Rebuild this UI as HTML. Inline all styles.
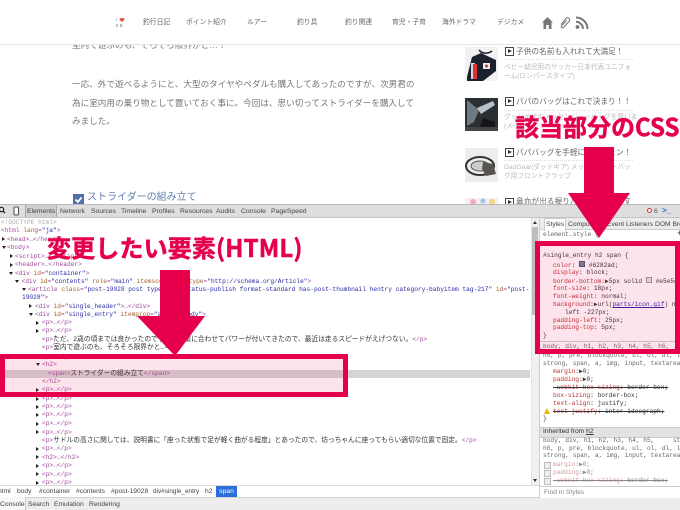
<!DOCTYPE html>
<html lang="ja"><head><meta charset="utf-8"><title>DevTools</title>
<style>
html,body{margin:0;padding:0;background:#fff}
#w{position:relative;width:680px;height:510px;overflow:hidden;background:#fff;font-family:"Liberation Sans","Noto Sans CJK JP",sans-serif;filter:blur(.3px)}
#w div,#w svg{position:absolute}
.n{top:18px;font-size:6.8px;line-height:9px;color:#666;white-space:nowrap}
.a{left:72px;font-size:8.6px;line-height:12px;color:#777;white-space:nowrap}
.t{left:516px;font-size:7.7px;line-height:10px;color:#666;white-space:nowrap}
.d{left:504px;font-size:6.7px;line-height:9px;color:#bbb;white-space:nowrap}
.l{left:504px;width:129px;height:0;border-top:1px dotted #ddd}
.b{left:505px;width:7px;height:7px;border:1px solid #444;background:#fff}
.b:after{content:"";position:absolute;left:2px;top:1px;border-left:4px solid #333;border-top:2.5px solid transparent;border-bottom:2.5px solid transparent}
.u{top:207px;font-size:6.8px;line-height:9px;color:#444;white-space:nowrap}
.m{font-family:"Liberation Mono","Noto Sans CJK JP",monospace;font-size:6.2px;line-height:8px;white-space:pre;color:#222}
.m i{font-style:normal;color:#a04a9c}
.m b{font-weight:normal;color:#a5612a}
.m u{text-decoration:none;color:#2b2ba6}
.m span{font-size:6.72px;color:#333}
.s{font-family:"Liberation Mono",monospace;font-size:6.2px;line-height:8px;white-space:pre;color:#333}
.s i{font-style:normal;color:#c03030}
.s s{color:#444}
.g{color:#888}
.g i{color:#d99}
.r{border-left:3.5px solid #222;border-top:2px solid transparent;border-bottom:2px solid transparent;width:0;height:0}
.o{border-top:3.5px solid #222;border-left:2px solid transparent;border-right:2px solid transparent;width:0;height:0}
.c{font-size:6.7px;line-height:9px;color:#444;white-space:nowrap}
.k{left:544px;width:5px;height:5px;border:1px solid #bbb;background:#eee}
.h{font-family:"Noto Sans CJK JP",sans-serif;font-weight:700;font-size:24px;line-height:30px;color:#e6004c;white-space:nowrap;-webkit-text-stroke:.5px #e6004c}
</style></head><body><div id="w">

<!-- page article -->
<div class="a" style="top:39px;color:#777">室内で遊ぶのも、そろそろ限界かと…！</div>
<div class="a" style="top:78px">一応、外で遊べるようにと、大型のタイヤやペダルも購入してあったのですが、次男君の</div>
<div class="a" style="top:97px">為に室内用の乗り物として置いておく事に。今回は、思い切ってストライダーを購入して</div>
<div class="a" style="top:115px">みました。</div>
<div style="left:73px;top:194px;width:11px;height:11px;background:#5170ad"></div>
<svg style="left:73px;top:194px" width="11" height="11"><path d="M2.5 5.5l2.3 2.5 3.8-4.6" stroke="#fff" stroke-width="1.8" fill="none"/></svg>
<div style="left:87px;top:191px;font-size:10px;line-height:14px;color:#6282ad;white-space:nowrap">ストライダーの組み立て</div>

<!-- header -->
<div style="left:0;top:0;width:680px;height:44px;background:#fff;border-bottom:1px solid #e4e4e4"></div>
<div style="left:115.500px;top:17px;font-size:4.5px;line-height:5.5px;color:#777;white-space:pre">I<br>S B</div>
<svg style="left:119px;top:17px" width="6" height="6" viewBox="0 0 7 6"><path d="M3.5 5.5L.6 2.5C0 1 2.500-.3 3.500 1.500 4.500-.3 7 1 6.400 2.500z" fill="#d8553f"/></svg>
<div class="n" style="left:143px">釣行日記</div>
<div class="n" style="left:186px">ポイント紹介</div>
<div class="n" style="left:247px">ルアー</div>
<div class="n" style="left:297px">釣り具</div>
<div class="n" style="left:345px">釣り関連</div>
<div class="n" style="left:392px">育児・子育</div>
<div class="n" style="left:442px">海外ドラマ</div>
<div class="n" style="left:497px">デジカメ</div>
<svg style="left:541px;top:15px" width="48" height="15" viewBox="0 0 48 15"><path d="M1 7.5L6.500 2 12 7.500 10.500 7.500 10.500 14 7.800 14 7.800 10 5.200 10 5.200 14 2.500 14 2.500 7.500z" fill="#777"/><path d="M20 9.500l5-6c2-2 5 .8 3 3l-5.500 6c-1.300 1.200-3-.4-1.800-1.800l4.800-5.200" stroke="#777" stroke-width="1.100" fill="none"/><circle cx="36.500" cy="12" r="1.900" fill="#777"/><path d="M35 6.800a7.200 7.200 0 0 1 7 7M35 2.500a11.500 11.500 0 0 1 11.500 11.500" stroke="#777" stroke-width="2" fill="none"/></svg>

<!-- sidebar -->
<svg style="left:465px;top:47px" width="33" height="34" viewBox="0 0 33 34"><rect width="33" height="34" fill="#f2f2f2"/><path d="M2 30L7 10 16 6 31 13 31 24 18 34H2z" fill="#1c2130"/><path d="M6 16h4v16H6z" fill="#d8d8d8"/><rect x="8" y="17" width="4" height="15" fill="#d33"/><rect x="18" y="16" width="7" height="6" fill="#eee"/><circle cx="21.500" cy="19" r="1.500" fill="#c33"/><path d="M14 3c3 4 9 4 13 1" stroke="#1c2130" stroke-width="1.500" fill="none"/></svg>
<svg style="left:465px;top:98px" width="33" height="33" viewBox="0 0 33 33"><rect width="33" height="33" fill="#2b2e33"/><path d="M2 2L14 12 9 24 2 28z" fill="#6f7a85"/><path d="M12 10l16-7 2 4-14 9z" fill="#b9c1c9"/><path d="M18 20l12 4v8H14z" fill="#14161a"/><rect x="0" y="29" width="33" height="4" fill="#444"/></svg>
<svg style="left:465px;top:148px" width="33" height="34" viewBox="0 0 33 34"><rect width="33" height="34" fill="#eceded"/><ellipse cx="15" cy="18" rx="14" ry="9" fill="none" stroke="#333" stroke-width="2"/><ellipse cx="15" cy="18" rx="9" ry="5" fill="#ccc" stroke="#555"/><path d="M18 14l10 2 3 10-10 2-4-7z" fill="#57544f"/></svg>
<svg style="left:465px;top:198px" width="33" height="7" viewBox="0 0 33 7"><rect width="33" height="7" fill="#f7eef3"/><circle cx="8" cy="4" r="3" fill="#f0a8c8"/><circle cx="18" cy="3" r="2.500" fill="#9cc8ec"/><circle cx="27" cy="4" r="3" fill="#f0d880"/></svg>
<div class="b" style="top:47px"></div><div class="t" style="top:47px">子供の名前も入れれて大満足！</div><div class="l" style="top:59px"></div>
<div class="d" style="top:63px">ベビー幼児用のサッカー日本代表ユニフォ</div><div class="d" style="top:72px">ーム(ロンパースタイプ)</div>
<div class="b" style="top:97px"></div><div class="t" style="top:97px">パパのバッグはこれで決まり！！</div><div class="l" style="top:110px"></div>
<div class="d" style="top:113px">グッドギアのメッセンジャーバッグを買いま</div><div class="d" style="top:122px">(メッセンジャーバッグ)</div>
<div class="b" style="top:148px"></div><div class="t" style="top:148px">パパバッグを手軽にイメチェン！</div><div class="l" style="top:160px"></div>
<div class="d" style="top:163px">DadGear(ダッドギア) メッセンジャーバッ</div><div class="d" style="top:172px">グ用フロントフラップ</div>
<div class="b" style="top:198px"></div><div class="t" style="top:197px">鼻血が出る握りハンドルなのです</div>

<!-- devtools base -->
<div style="left:0;top:204px;width:680px;height:12px;background:#dedede;border-top:1px solid #bbb;border-bottom:1px solid #c4c4c4"></div>
<div style="left:0;top:218px;width:680px;height:268px;background:#fff"></div>
<svg style="left:0;top:206px" width="22" height="10"><circle cx="1.500" cy="3.500" r="2.200" fill="none" stroke="#222" stroke-width="1.200"/><path d="M3 5l2 2.200" stroke="#222" stroke-width="1.300"/><rect x="14" y="1" width="4.500" height="8" rx="1" fill="#fff" stroke="#555" stroke-width="1.100"/></svg>
<div style="left:25px;top:205px;width:30px;height:12px;background:#cfcfcf;border-left:1px solid #aaa;border-right:1px solid #aaa"></div>
<div class="u" style="left:27px">Elements</div><div class="u" style="left:60px">Network</div><div class="u" style="left:91px">Sources</div><div class="u" style="left:121px">Timeline</div><div class="u" style="left:152px">Profiles</div><div class="u" style="left:180px">Resources</div><div class="u" style="left:216px">Audits</div><div class="u" style="left:241px">Console</div><div class="u" style="left:271px">PageSpeed</div>
<div style="left:647px;top:208px;width:3px;height:3px;border:1.500px solid #d33;border-radius:50%;background:#fff"></div>
<div class="u" style="left:654px;color:#555">6</div>
<div class="u" style="left:662px;top:206px;color:#2a6ad8;font-size:8px;font-weight:700">&gt;_</div>
<div class="u" style="left:677px;color:#444">⋮</div>

<!-- elements tree -->
<div class="m" style="left:1px;top:219px;color:#aaa">&lt;!DOCTYPE html&gt;</div>
<div class="m" style="left:1px;top:227px"><i>&lt;html</i> <b>lang</b><i>=</i><u>"ja"</u><i>&gt;</i></div>
<div class="r" style="left:2px;top:237px"></div><div class="m" style="left:7px;top:236px"><i>&lt;head&gt;…&lt;/head&gt;</i></div>
<div class="o" style="left:2px;top:246px"></div><div class="m" style="left:7px;top:244px"><i>&lt;body&gt;</i></div>
<div class="r" style="left:10px;top:254px"></div><div class="m" style="left:15px;top:253px"><i>&lt;script&gt;…&lt;/script&gt;</i></div>
<div class="r" style="left:10px;top:263px"></div><div class="m" style="left:15px;top:261px"><i>&lt;header&gt;…&lt;/header&gt;</i></div>
<div class="o" style="left:9px;top:272px"></div><div class="m" style="left:15px;top:270px"><i>&lt;div</i> <b>id</b><i>=</i><u>"container"</u><i>&gt;</i></div>
<div class="o" style="left:15px;top:280px"></div><div class="m" style="left:21.500px;top:278px"><i>&lt;div</i> <b>id</b><i>=</i><u>"contents"</u> <b>role</b><i>=</i><u>"main"</u> <b>itemscope</b> <b>itemtype</b><i>=</i><u>"http://schema.org/Article"</u><i>&gt;</i></div>
<div class="o" style="left:22px;top:288px"></div><div class="m" style="left:28px;top:286px"><i>&lt;article</i> <b>class</b><i>=</i><u>"post-19028 post type-post status-publish format-standard has-post-thumbnail hentry category-babyitem tag-217"</u> <b>id</b><i>=</i><u>"post-</u></div>
<div class="m" style="left:22px;top:294px"><u>19028"</u><i>&gt;</i></div>
<div class="r" style="left:29px;top:304px"></div><div class="m" style="left:35px;top:302.500px"><i>&lt;div</i> <b>id</b><i>=</i><u>"single_header"</u><i>&gt;…&lt;/div&gt;</i></div>
<div class="o" style="left:29px;top:313px"></div><div class="m" style="left:35px;top:311px"><i>&lt;div</i> <b>id</b><i>=</i><u>"single_entry"</u> <b>itemprop</b><i>=</i><u>"articleBody"</u><i>&gt;</i></div>
<div class="r" style="left:36px;top:321px"></div><div class="m" style="left:42px;top:319px"><i>&lt;p&gt;…&lt;/p&gt;</i></div>
<div class="r" style="left:36px;top:329px"></div><div class="m" style="left:42px;top:327px"><i>&lt;p&gt;…&lt;/p&gt;</i></div>
<div class="m" style="left:42px;top:335.500px"><i>&lt;p&gt;</i><span>ただ、2歳の頃までは良かったのですが、体重に合わせてパワーが付いてきたので、最近は走るスピードがえげつない。</span><i>&lt;/p&gt;</i></div>
<div class="m" style="left:42px;top:344px"><i>&lt;p&gt;</i><span>室内で遊ぶのも、そろそろ限界かと…</span><i>&lt;/p&gt;</i></div>
<div class="r" style="left:36px;top:354px"></div><div class="m" style="left:42px;top:352.500px"><i>&lt;p&gt;…&lt;/p&gt;</i></div>
<div style="left:0;top:369.500px;width:530px;height:8px;background:#d4d4d4"></div>
<div class="o" style="left:36px;top:363px"></div><div class="m" style="left:42px;top:361px"><i>&lt;h2&gt;</i></div>
<div class="m" style="left:48px;top:369.500px"><i>&lt;span&gt;</i><span>ストライダーの組み立て</span><i>&lt;/span&gt;</i></div>
<div class="m" style="left:42px;top:378px"><i>&lt;/h2&gt;</i></div>
<div class="r" style="left:36px;top:388px"></div><div class="m" style="left:42px;top:386px"><i>&lt;p&gt;…&lt;/p&gt;</i></div>
<div class="r" style="left:36px;top:397px"></div><div class="m" style="left:42px;top:395px"><i>&lt;p&gt;…&lt;/p&gt;</i></div>
<div class="r" style="left:36px;top:405px"></div><div class="m" style="left:42px;top:403px"><i>&lt;p&gt;…&lt;/p&gt;</i></div>
<div class="r" style="left:36px;top:413px"></div><div class="m" style="left:42px;top:411px"><i>&lt;p&gt;…&lt;/p&gt;</i></div>
<div class="r" style="left:36px;top:422px"></div><div class="m" style="left:42px;top:420px"><i>&lt;p&gt;…&lt;/p&gt;</i></div>
<div class="r" style="left:36px;top:430px"></div><div class="m" style="left:42px;top:428.500px"><i>&lt;p&gt;…&lt;/p&gt;</i></div>
<div class="m" style="left:42px;top:437px"><i>&lt;p&gt;</i><span>サドルの高さに関しては、説明書に「座った状態で足が軽く曲がる程度」とあったので、坊っちゃんに座ってもらい適切な位置で固定。</span><i>&lt;/p&gt;</i></div>
<div class="r" style="left:36px;top:447px"></div><div class="m" style="left:42px;top:445px"><i>&lt;p&gt;…&lt;/p&gt;</i></div>
<div class="r" style="left:36px;top:455px"></div><div class="m" style="left:42px;top:453.500px"><i>&lt;h2&gt;…&lt;/h2&gt;</i></div>
<div class="r" style="left:36px;top:464px"></div><div class="m" style="left:42px;top:462px"><i>&lt;p&gt;…&lt;/p&gt;</i></div>
<div class="r" style="left:36px;top:472px"></div><div class="m" style="left:42px;top:470.500px"><i>&lt;p&gt;…&lt;/p&gt;</i></div>
<div class="r" style="left:36px;top:481px"></div><div class="m" style="left:42px;top:479px"><i>&lt;p&gt;…&lt;/p&gt;</i></div>

<!-- scrollbar -->
<div style="left:531px;top:218px;width:8px;height:268px;background:#f0f0f0;border-left:1px solid #e2e2e2"></div>
<div style="left:532px;top:227px;width:6px;height:88px;background:#bdbdbd"></div>
<svg style="left:532px;top:220px" width="6" height="264"><path d="M1 4l2-3 2 3zM1 259h4l-2 3z" fill="#333"/></svg>

<!-- breadcrumb + drawer -->
<div style="left:0;top:485px;width:540px;height:12px;background:#fff;border-top:1px solid #ddd;border-bottom:1px solid #ccc"></div>
<div class="c" style="left:-2px;top:487px">html</div><div class="c" style="left:17px;top:487px">body</div><div class="c" style="left:39px;top:487px">#container</div><div class="c" style="left:76px;top:487px">#contents</div><div class="c" style="left:111px;top:487px">#post-19028</div><div class="c" style="left:153px;top:487px;font-size:6.4px">div#single_entry</div><div class="c" style="left:205px;top:487px">h2</div>
<div style="left:216px;top:486px;width:21px;height:11px;background:#2a6fdb;color:#fff;font-size:6.8px;line-height:11px;text-align:center">span</div>
<div style="left:0;top:497px;width:680px;height:12px;background:#ededed;border-top:1px solid #d0d0d0;border-bottom:1px solid #bbb"></div>
<div style="left:0;top:497px;width:25px;height:13px;background:#f7f7f7;border-right:1px solid #ccc"></div>
<div class="c" style="left:0;top:500px">Console</div><div class="c" style="left:28px;top:500px">Search</div><div class="c" style="left:54px;top:500px">Emulation</div><div class="c" style="left:89px;top:500px">Rendering</div>

<!-- styles pane -->
<div style="left:539px;top:218px;width:1px;height:279px;background:#ccc"></div>
<div style="left:540px;top:218px;width:140px;height:11px;background:#ececec;border-bottom:1px solid #ccc"></div>
<div style="left:544px;top:218px;width:20px;height:12px;background:#fff;border:1px solid #ccc;border-bottom:0"></div>
<div class="c" style="left:546px;top:220px">Styles</div><div class="c" style="left:568px;top:220px">Computed</div><div class="c" style="left:607px;top:220px">Event Listeners</div><div class="c" style="left:655px;top:220px">DOM Breakpoints</div>
<div class="s" style="left:543px;top:231px;color:#666">element.style {</div>
<div class="s" style="left:677px;top:230px;font-size:9px;color:#333">+</div>
<div class="s" style="left:543px;top:252px">#single_entry h2 span {</div>
<div class="s" style="left:553px;top:261px"><i>color</i>: <span style="display:inline-block;width:4px;height:4px;background:#6282ad;border:.5px solid #555"></span> #6282ad;</div>
<div class="s" style="left:553px;top:269px"><i>display</i>: block;</div>
<div class="s" style="left:553px;top:277px"><i>border-bottom</i>:▶5px solid <span style="display:inline-block;width:4px;height:4px;background:#e5e5e5;border:.5px solid #999"></span> #e5e5e5;</div>
<div class="s" style="left:553px;top:284.500px"><i>font-size</i>: 18px;</div>
<div class="s" style="left:553px;top:293px"><i>font-weight</i>: normal;</div>
<div class="s" style="left:553px;top:301px"><i>background</i>:▶url(<span style="color:#2222aa;text-decoration:underline">parts/icon.gif</span>) no-repeat</div>
<div class="s" style="left:565px;top:309px">left -227px;</div>
<div class="s" style="left:553px;top:317px"><i>padding-left</i>: 25px;</div>
<div class="s" style="left:553px;top:324px"><i>padding-top</i>: 5px;</div>
<div class="s" style="left:543px;top:332px">}</div>
<div style="left:540px;top:341px;width:140px;height:1px;background:#ccc"></div>
<div class="s" style="left:543px;top:343px;color:#666">body, div, h1, h2, h3, h4, h5, h6,</div>
<div class="s" style="left:543px;top:351.500px;color:#666">h6, p, pre, blockquote, ul, ol, dl, li,</div>
<div class="s" style="left:543px;top:359.500px;color:#666">strong, span, a, img, input, textarea {</div>
<div class="s" style="left:553px;top:368px"><i>margin</i>:▶0;</div>
<div class="s" style="left:553px;top:376px"><i>padding</i>:▶0;</div>
<div class="s" style="left:553px;top:384px;text-decoration:line-through"><i>-webkit-box-sizing</i>: border-box;</div>
<div class="s" style="left:553px;top:392px"><i>box-sizing</i>: border-box;</div>
<div class="s" style="left:553px;top:399.500px"><i>text-align</i>: justify;</div>
<svg style="left:544px;top:408px" width="6" height="6"><path d="M3 0l3 6H0z" fill="#f0b400"/></svg>
<div class="s" style="left:553px;top:407.500px;text-decoration:line-through"><i>text-justify</i>: inter-ideograph;</div>
<div class="s" style="left:543px;top:415px">}</div>
<div style="left:540px;top:427px;width:140px;height:9px;background:#e2e2e2;border-top:1px solid #ccc;border-bottom:1px solid #ccc"></div>
<div class="c" style="left:543px;top:426.500px;color:#333">Inherited from <span style="text-decoration:underline">h2</span></div>
<div class="s" style="left:543px;top:437px;color:#666">body, div, h1, h2, h3, h4, h5,     sty</div>
<div class="s" style="left:543px;top:444.500px;color:#666">h6, p, pre, blockquote, ul, ol, dl, li,</div>
<div class="s" style="left:543px;top:452px;color:#666">strong, span, a, img, input, textarea {</div>
<div class="k" style="top:462px"></div><div class="k" style="top:470px"></div><div class="k" style="top:478px"></div>
<div class="s g" style="left:553px;top:461px"><i>margin</i>:▶0;</div>
<div class="s g" style="left:553px;top:469px"><i>padding</i>:▶0;</div>
<div class="s g" style="left:553px;top:477px;text-decoration:line-through"><i>-webkit-box-sizing</i>: border-box;</div>
<div style="left:540px;top:486px;width:140px;height:11px;background:#fff;border-top:1px solid #ccc"></div>
<div class="c" style="left:544px;top:488px;color:#888">Find in Styles</div>

<!-- annotations -->
<div style="left:0;top:354px;width:338px;height:33px;border:5px solid #e6004c;background:rgba(240,40,110,.13)"></div>
<div style="left:535px;top:241px;width:135px;height:103px;border:5px solid #e6004c;background:rgba(240,40,110,.13)"></div>
<svg style="left:0;top:0" width="680" height="510"><path d="M160 270H190V316H205L175 356 137 316H160z" fill="#e6004c"/><path d="M584 147H614V193H630L599 238 568 193H584z" fill="#e6004c"/></svg>
<div class="h" style="left:47px;top:232px;letter-spacing:.15px">変更したい要素(HTML)</div>
<div class="h" style="left:515px;top:111px">該当部分のCSS</div>
</div></body></html>
